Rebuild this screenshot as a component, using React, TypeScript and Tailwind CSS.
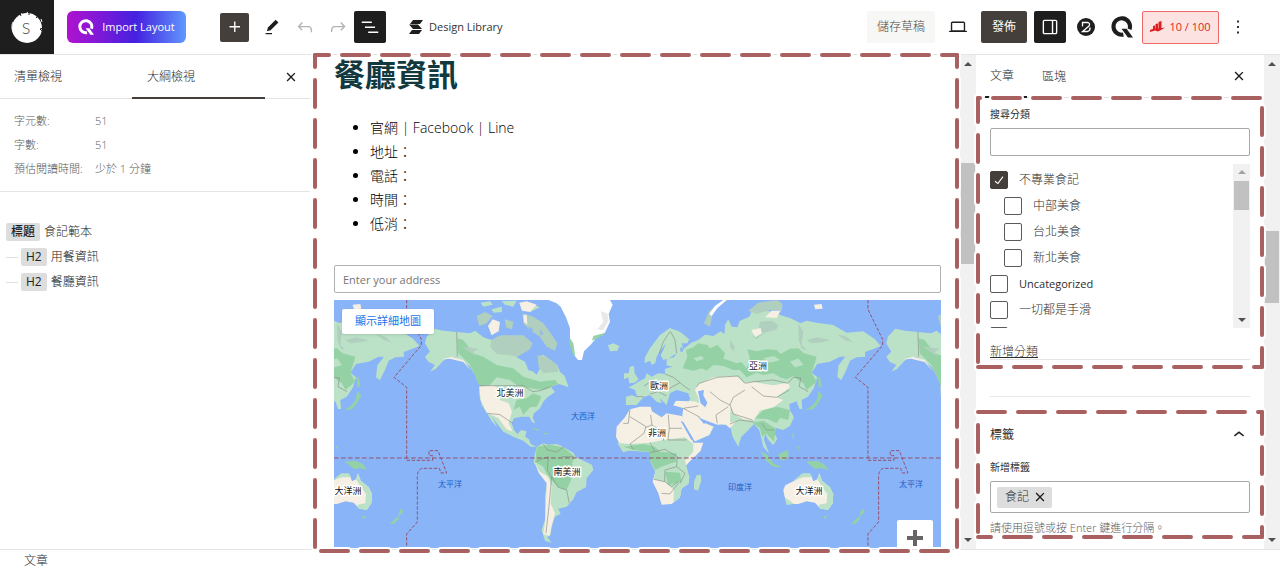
import React, { useState } from 'react';
import clsx from 'clsx';

const ICONS = {
  plus: 'M11 12.5V17.5H12.5V12.5H17.5V11H12.5V6H11V11H6V12.5H11Z',
  edit: 'm19 7-3-3-8.5 8.5-1 4 4-1L19 7Zm-7 11.5H5V20h7v-1.5Z',
  undo: 'M18.3 11.7c-.6-.6-1.4-.9-2.3-.9H6.7l2.9-3.3-1.1-1-4.5 5L8.5 16l1-1-2.7-2.7H16c.5 0 .9.2 1.3.5 1 1 1 3.4 1 4.5v.3h1.5v-.2c0-1.5 0-4.3-1.5-5.7z',
  redo: 'M15.6 6.5l-1.1 1 2.9 3.3H8c-.9 0-1.7.3-2.3.9-1.4 1.5-1.4 4.2-1.4 5.6v.2h1.5v-.3c0-1.1 0-3.5 1-4.5.3-.3.7-.5 1.3-.5h9.2L14.5 15l1.1 1.1 4.6-4.6-4.6-5z',
  list: 'M3 6h11v1.5H3V6Zm3.5 5.5h11V13h-11v-1.5ZM21 17H10v1.5h11V17Z',
  close: 'M12 13.06l3.712 3.713 1.061-1.06L13.061 12l3.712-3.712-1.06-1.06L12 10.938 8.288 7.227l-1.061 1.06L10.939 12l-3.712 3.712 1.06 1.061L12 13.061z',
  desktop: 'M20.5 16h-.7V8c0-1.1-.9-2-2-2H6.2c-1.1 0-2 .9-2 2v8h-.7c-.8 0-1.5.7-1.5 1.5h20c0-.8-.7-1.5-1.5-1.5zM5.7 8c0-.3.2-.5.5-.5h11.6c.3 0 .5.2.5.5v7.6H5.7V8z',
  drawer: 'M18 4H6c-1.1 0-2 .9-2 2v12c0 1.1.9 2 2 2h12c1.1 0 2-.9 2-2V6c0-1.1-.9-2-2-2zm-4 14.5H6c-.3 0-.5-.2-.5-.5V6c0-.3.2-.5.5-.5h8v13zm4.5-.5c0 .3-.2.5-.5.5h-2.5v-13H18c.3 0 .5.2.5.5v12z',
  more: 'M13 19h-2v-2h2v2zm0-6h-2v-2h2v2zm0-6h-2V5h2v2z',
  up: 'M6.5 12.4L12 8l5.5 4.4-.9 1.2L12 10l-4.5 3.6-1-1.2z',
  check: 'M16.7 7.1l-6.3 8.5-3.3-2.5-.9 1.2 4.5 3.4L17.9 8z',
};

const Icon = ({ name, size = 22 }: { name: keyof typeof ICONS; size?: number }) => (
  <svg width={size} height={size} viewBox="0 0 24 24" fill="currentColor" className="shrink-0" aria-hidden="true">
    <path d={ICONS[name]} />
  </svg>
);

const QLogo = ({ size }: { size: number }) => (
  <svg width={size} height={size} viewBox="0 0 24 24" fill="none" stroke="currentColor" strokeWidth="4.500" className="shrink-0" aria-hidden="true">
    <path d="M13.500 20.300A9 9 0 1 1 20.200 14.500" />
    <path d="M11.500 14h5.500L24 23.500h-5.500z" fill="currentColor" stroke="none" />
  </svg>
);

// dashed highlight round a region, each side has its own dash phase
interface FrameProps {
  className: string;
  phase: [number, number, number, number];
}

const Frame = ({ className, phase }: FrameProps) => {
  const [top, right, bottom, left] = phase;
  const sides = (
    <>
      <line x1="0" y1="0" x2="100%" y2="0" strokeDashoffset={top} />
      <line x1="100%" y1="0" x2="100%" y2="100%" strokeDashoffset={right} />
      <line x1="0" y1="100%" x2="100%" y2="100%" strokeDashoffset={bottom} />
      <line x1="0" y1="0" x2="0" y2="100%" strokeDashoffset={left} />
    </>
  );
  return (
    <div className={clsx('absolute pointer-events-none z-10', className)}>
      <svg className="w-full h-full overflow-visible" strokeDasharray="27 13" strokeLinecap="round" aria-hidden="true">
        <g stroke="#ffffff" strokeWidth="8">{sides}</g>
        <g stroke="#a86160" strokeWidth="4">{sides}</g>
      </svg>
    </div>
  );
};

const Arrow = ({ down = false, light = false }: { down?: boolean; light?: boolean }) => (
  <svg width="8" height="4" viewBox="0 0 8 4" className={clsx('shrink-0', light ? 'fill-[#a3a3a3]' : 'fill-[#505050]')} aria-hidden="true">
    <path d={down ? 'M0 0h8L4 4z' : 'M0 4h8L4 0z'} />
  </svg>
);

const ScrollBar = ({ className, thumb, light }: { className: string; thumb: string; light?: boolean }) => (
  <div className={clsx('shrink-0 flex flex-col items-center bg-[#f1f1f1]', className)}>
    <Arrow light={light} />
    <div className="flex-1 self-stretch px-px">
      <div className={clsx('bg-[#c1c1c1]', thumb)} />
    </div>
    <Arrow down />
  </div>
);

const OldWorld = () => (
  <g>
    <path fill="#bbe2c6" d="M-12 345L-12 320 5 316 22 322 15 300-5 292 12 284 25 275 45 265 50 250 65 260 85 250 105 252 105 236 128 230 110 226 110 206 132 202 140 190 118 204 100 210 92 196 100 180 108 160 92 180 80 200 76 218 66 225 60 212 44 220 45 202 60 175 90 135 120 114 150 125 178 148 172 160 155 160 160 178 184 158 205 150 225 134 250 138 272 124 284 132 285 104 295 88 305 110 322 112 330 92 358 80 366 62 400 56 440 72 480 84 512 100 530 92 560 98 610 105 650 128 700 124 735 148 752 168 728 178 705 186 706 200 680 202 660 212 650 238 634 270 622 262 626 226 646 200 630 200 600 215 562 222 545 248 562 262 552 294 534 320 515 330 517 358 508 356 500 334 478 342 480 360 492 382 480 408 460 420 438 414 430 422 442 446 430 466 414 448 405 430 402 450 418 492 400 470 388 420 372 402 350 425 334 440 325 470 308 440 300 405 284 404 262 400 210 385 226 400 252 410 238 435 195 454 178 430 156 390 160 354 132 346 138 332 180 326 175 310 140 300 120 310 110 345 90 325 95 340 80 335 60 315 40 322 20 345z" />
    <path fill="#94d2a5" d="M158 235L172 200 168 180 190 172 205 160 232 165 240 175 262 165 285 190 280 206 300 212 320 220 335 216 350 235 360 205 352 178 380 184 410 178 440 180 452 192 480 176 505 175 522 190 560 200 556 215 545 248 560 275 530 300 520 280 505 270 490 258 470 268 450 262 430 250 400 255 380 248 350 262 330 240 310 240 280 228 250 225 230 242 215 235 190 242zM375 385L400 360 440 350 480 360 475 390 450 384 440 400 415 388zM368 398L400 392 412 400 438 416 432 455 418 440 408 430 396 440 390 415z" />
    <path fill="#bbe2c6" d="M190 205L215 198 222 206 200 214zM400 205L432 198 450 210 420 218zM480 215L505 205 520 225 495 232z" />
    <path fill="#b1cfbe" d="M355 62L385 38 440 30 458 42 455 62 420 60 380 72zM390 95L425 92 445 105 440 118 400 130 380 148 370 140 385 118zM505 100L520 125 515 165 530 180 516 176 506 150zM530 150L560 142 600 150 580 156 545 160zM300 150L315 170 310 184 300 170zM620 132L650 140 670 158 645 150z" />
    <path fill="#b1cfbe" d="M222 100L238 62 282 30 292 30 250 62 240 110z" />
    <path fill="#ffffff" d="M238 72L255 48 280 30 290 30 262 55 245 78z" />
    <path fill="#f6efe3" d="M195 300L206 282 250 262 320 258 342 278 370 276 430 286 474 278 480 292 440 322 460 330 430 352 390 362 370 392 340 388 312 372 302 352 300 402 262 404 208 384 226 400 250 410 238 435 195 454 178 430 156 390 160 354 130 346 138 332 192 334 208 340 204 320zM364 120L392 114 396 130 376 142zM405 82L425 62 452 62 440 84zM285 402L320 392 300 415zM552 44L575 42 578 56 556 58z" />
    <path fill="#f6efe3" d="M-42 440L-40 410-15 382 0 358 30 350 62 350 66 364 95 382 110 370 155 378 168 404 182 436 190 458 220 458 212 482 180 514 165 530 178 560 175 582 155 595 150 622 125 642 95 644 85 610 68 575 76 545 60 510 62 488 40 478 10 478-20 485z" />
    <path fill="#bbe2c6" d="M-38 458L0 462 60 458 100 450 165 442 190 462 190 485 165 512 178 560 175 582 155 595 150 622 130 638 132 600 105 575 72 568 76 545 60 510 60 486 0 482-22 485z" />
    <path fill="#94d2a5" d="M-20 470L40 462 75 470 90 485 140 490 138 515 100 528 75 540 60 510 60 486 10 480zM105 545L150 548 155 575 115 585z" />
    <path fill="#bbe2c6" d="M200 556L212 554 214 572 204 602 192 598 192 576zM0 230L12 228 14 250 26 268 14 278-2 280-5 262-18 268-18 250-4 250z" />
    <path fill="#94d2a5" d="M392 485L412 495 430 520 458 532 430 530 408 512zM445 494L462 484 474 480 476 502 460 512 448 506zM528 515L560 512 582 522 596 540 572 534 556 538 540 524zM484 430L492 432 492 450zM500 468L508 470 506 480zM566 304L578 316 566 338 550 358 528 360 548 346 560 330zM570 262L576 290 566 292 564 260z" />
    <path fill="#f6efe3" d="M460 600L466 586 490 574 520 558 545 560 550 574 562 568 568 550 576 572 598 590 610 612 608 640 594 660 570 654 555 638 530 634 505 642 472 642 464 620z" />
    <path fill="#bbe2c6" d="M548 562L540 550 518 550 490 572 520 562zM562 568L568 550 576 572 600 590 610 612 608 640 594 660 570 656 566 644 590 640 592 612 575 588zM464 622L470 645 492 642 482 634z" />
    <path fill="#94d2a5" d="M578 678L592 678 586 688zM694 658L706 662 694 676 688 680zM686 680L692 684 676 702 664 700z" />
    <path fill="#8ab4f8" d="M122 318L138 306 150 316 165 314 182 324 176 334 140 332 126 330zM204 304L222 300 220 316 232 338 226 352 212 340zM152 392L160 396 190 446 184 450zM204 380L232 396 222 402zM152 170L160 176 158 186 150 184z" />
    <path fill="none" stroke="#8b8f88" strokeWidth="2" d="M200 290L208 280 262 262 325 258 345 280 372 275 430 270 474 280 490 262 512 264 508 290 535 305M365 290L400 318 440 322 478 300M240 305L270 330 300 345 310 322 345 300M262 400L258 375 295 350M300 402L330 390 372 396M205 348L160 355 210 382M300 345L310 372 368 390M395 400L410 420 432 420M0 358L-5 400-20 400M0 380L48 410 42 430 0 462M62 375L66 405 48 412M115 374L118 415 156 415M66 405L104 430 100 452M118 415L114 450 170 450M60 488L105 478 142 500 140 530 105 540 104 575 72 568M0 462L10 478M60 458L75 485M140 530L165 550 150 580M104 575L125 590 145 575M95 610L120 612 145 580M42 288L62 275 100 280 110 300 150 278M60 312L85 305 110 318M105 252L130 262 165 290 180 300M88 190L100 155 120 125M122 125L135 150 140 190M20 320L42 320" />
  </g>
);

const NewWorld = () => (
  <g>
    <path fill="#bbe2c6" d="M345 160L350 140 372 116 400 122 440 126 480 130 496 122 520 142 545 150 600 150 625 182 620 202 645 215 655 240 668 244 680 254 690 235 683 200 700 194 720 210 742 225 750 245 764 258 776 292 748 282 722 290 735 306 712 322 700 335 690 355 672 370 668 384 676 400 666 396 658 380 635 380 612 385 605 400 612 420 622 432 634 420 650 424 645 440 657 448 662 462 680 470 662 470 640 452 610 440 580 425 562 402 545 378 562 412 545 394 532 370 515 345 508 315 508 285 495 255 480 230 455 210 435 202 420 202 400 212 378 236 360 245 375 225 355 215 345 200 360 185z" />
    <path fill="#94d2a5" d="M442 145L460 150 490 190 520 200 560 225 610 235 640 260 690 275 735 270 745 282 700 300 660 295 620 285 600 270 560 262 540 285 508 288 498 262 478 222 445 190zM620 330L650 325 670 310 695 320 680 350 660 352 640 375 630 350 610 360z" />
    <path fill="#b1cfbe" d="M545 150L570 136 640 136 668 160 660 178 640 190 622 200 600 196 560 192 540 170zM638 70L670 80 700 100 722 130 742 160 735 182 710 170 690 140 660 120 640 100zM500 78L525 66 548 78 530 100 508 108zM585 88L610 95 606 118 588 112zM683 196L710 200 742 225 745 245 700 250 686 230zM455 170L505 176 490 186 500 200z" />
    <path fill="#bbe2c6" d="M512 38L540 34 548 44 520 50zM545 58L575 50 576 66 550 68zM575 34L620 32 610 50 585 44zM640 50L670 44 690 52 660 66z" />
    <path fill="#8ab4f8" d="M572 118L582 128 570 138 562 132zM655 108L672 120 662 124zM690 118L700 132 692 136z" />
    <path fill="#f6efe3" d="M534 108L548 88 570 96 566 124 545 136zM628 38L650 34 680 44 660 66 636 62zM640 76L650 74 652 104 642 96z" />
    <path fill="#ffffff" d="M716 30L740 40 752 50 768 82 780 115 780 150 790 192 804 210 816 210 822 184 842 164 862 140 884 130 900 95 896 72 908 44 900 30z" />
    <path fill="#e7e9e9" d="M872 64L892 70 896 92 880 120 862 118 880 96z" />
    <path fill="#94d2a5" d="M780 145L790 160 796 200 786 186 778 160zM850 138L886 128 880 136 846 152z" />
    <path fill="#bbe2c6" d="M894 166L910 160 928 168 922 182 900 184z" />
    <path fill="#f6efe3" d="M508 290L550 286 575 300 570 330 596 340 606 365 596 400 608 425 590 418 565 384 530 368 512 330zM395 208L425 200 460 210 484 244 460 216 420 206z" />
    <path fill="#94d2a5" d="M664 412L690 420 680 422zM700 428L718 430 704 434z" />
    <path fill="#bbe2c6" d="M680 470L700 460 715 464 740 462 755 468 790 488 798 502 846 524 850 540 830 565 828 592 800 606 790 628 770 650 745 656 752 672 735 680 725 710 722 735 712 742 725 758 705 752 695 720 705 690 705 620 712 572 690 545 672 520 672 505z" />
    <path fill="#94d2a5" d="M680 470L720 464 760 472 795 500 786 520 794 545 770 600 745 592 715 560 700 530 676 516z" />
    <path fill="#f6efe3" d="M676 522L690 545 715 560 725 590 722 640 735 670 725 708 718 738 700 732 706 690 708 640 710 580 686 548z" />
    <path fill="none" stroke="#8b8f88" strokeWidth="2" d="M440 126L442 200M508 287H640L668 305 690 302 722 290M532 370L570 374 608 400M700 462L712 480 740 486 762 470M676 515L715 500 712 540 745 592M745 592L770 600 778 640M725 560L718 640 708 730M790 500H755" />
  </g>
);

const DateLine = () => (
  <path
    fill="none"
    stroke="#93506d"
    strokeWidth="3"
    strokeDasharray="10 5"
    d="M290 30V58L334 148V166L252 262 290 292V511H368V497H357V482H384L410 549H393L388 535H336Q322 540 322 560V696L290 732V771"
  />
);

const LABELS = [
  { x: 176, y: 96, text: '北美洲' },
  { x: 233, y: 175, text: '南美洲' },
  { x: 325, y: 89, text: '歐洲' },
  { x: 323, y: 136, text: '非洲' },
  { x: 424, y: 69, text: '亞洲' },
  { x: 475, y: 194, text: '大洋洲' },
  { x: 14, y: 194, text: '大洋洲' },
];

const SEAS = [
  { x: 249, y: 119, text: '大西洋' },
  { x: 116, y: 187, text: '太平洋' },
  { x: 406, y: 190, text: '印度洋' },
  { x: 577, y: 187, text: '太平洋' },
];

const WorldMap = () => (
  <svg viewBox="0 0 607 248" preserveAspectRatio="xMidYMid slice" className="block w-full h-[248px] bg-[#8ab4f8]" role="img" aria-label="地圖">
    <g transform="translate(-24 -10) scale(0.3333)">
      {[-1384, 0, 1384].map((shift) => (
        <g key={shift} transform={`translate(${shift} 0)`}>
          <g transform="translate(960 0)"><OldWorld /></g>
          <NewWorld />
          <DateLine />
        </g>
      ))}
      <path d="M72 504H1900" stroke="#93506d" strokeWidth="3" strokeDasharray="14 7" />
    </g>
    <g textAnchor="middle" fontSize="9">
      {LABELS.map((l) => (
        <text key={l.text + l.x} x={l.x} y={l.y} fill="#111111" stroke="#ffffff" strokeWidth="3" strokeLinejoin="round" paintOrder="stroke">{l.text}</text>
      ))}
      {SEAS.map((l) => (
        <text key={l.text + l.x} x={l.x} y={l.y} fill="#1c5cc4" fontSize="8">{l.text}</text>
      ))}
    </g>
  </svg>
);

const Header = () => (
  <header className="h-[55px] shrink-0 flex items-center justify-between border-b border-[#e4e4e4]">
    <div className="flex items-center">
      <a href="#home" aria-label="Home" className="w-[54px] h-[54px] bg-[#1e1e1e] flex items-center justify-center">
        <svg width="34" height="34" viewBox="0 0 34 34" aria-hidden="true">
          <circle cx="17" cy="18" r="15" fill="#ffffff" />
          <path d="M10 3l1 3M19 1l0 4M28 6l-2 2M33 18l-3 1 2 2" stroke="#1e1e1e" strokeWidth="1" fill="none" />
          <path d="M11 3.500l1.500 1M17 2l1 2M31 9l1 3M3 12C1 16 2 21 4 24" stroke="#ffffff" strokeWidth="1" fill="none" />
          <text x="16" y="24" textAnchor="middle" fontSize="16" fill="#444444" fontFamily="Lato, sans-serif" fontWeight="300">S</text>
        </svg>
      </a>
      <button className="ml-[13px] w-[119px] h-8 rounded-md bg-[linear-gradient(90deg,#b012cf_0%,#4421e0_58%,#5f98fd_100%)] text-white text-[11px] flex items-center justify-center gap-2">
        <QLogo size={16} />
        Import Layout
      </button>
      <button aria-label="Add block" className="ml-[34px] size-[29px] rounded-xs bg-[#443f3b] text-white flex items-center justify-center"><Icon name="plus" /></button>
      <div className="ml-3 flex items-center gap-[11px]">
        <button aria-label="Tools"><Icon name="edit" /></button>
        <button aria-label="Undo" className="text-[#b4b4b4]"><Icon name="undo" /></button>
        <button aria-label="Redo" className="text-[#b4b4b4]"><Icon name="redo" /></button>
      </div>
      <button aria-label="Document overview" className="ml-[5px] size-8 rounded-xs bg-[#1e1e1e] text-white flex items-center justify-center"><Icon name="list" /></button>
      <button className="ml-[22px] flex items-center gap-[5px] text-[11px] text-[#333333]">
        <svg width="16" height="16" viewBox="0 0 16 16" fill="#1e1e1e" aria-hidden="true">
          <path d="M5 1h10l-3 4H2z M1 5.500h9l4 4.500H5z M4 11h10l-3 4H1z" />
        </svg>
        Design Library
      </button>
    </div>
    <div className="flex items-center pr-[31px]">
      <button className="w-[68px] h-8 rounded-xs bg-[#f7f7f6] text-xs font-light text-[#4c4c4c]">儲存草稿</button>
      <button aria-label="Preview" className="ml-3"><Icon name="desktop" /></button>
      <button className="ml-3 w-[46px] h-8 rounded-xs bg-[#443f3b] text-xs text-white">發佈</button>
      <button aria-label="Settings" className="ml-[7px] size-8 rounded-xs bg-[#1e1e1e] text-white flex items-center justify-center"><Icon name="drawer" size={22} /></button>
      <button aria-label="Blocks" className="ml-[11px]">
        <svg width="18" height="18" viewBox="0 0 18 18" aria-hidden="true">
          <circle cx="9" cy="9" r="9" fill="#1e1e1e" />
          <path d="M5.500 8.500V4.500h5.500q2.500 1 1 3.500L5.500 13.500h5q3-1 2.500-4" stroke="#ffffff" strokeWidth="1.300" fill="none" />
        </svg>
      </button>
      <button aria-label="Layouts" className="ml-4 text-[#1e1e1e]"><QLogo size={22} /></button>
      <button className="ml-[9px] w-[77px] h-[33px] rounded-xs border border-[#f0696a] bg-[#fde2e2] text-[#dd1f1f] text-[11px] font-medium flex items-center justify-center gap-1">
        <svg width="15" height="12" viewBox="0 0 15 12" fill="currentColor" aria-hidden="true">
          <path d="M3 5l2-.5V8H3zM5.500 3l2.500-.5V8H5.500zM8.500 1l3-1v8h-3zM0 9l4-1.500h5l6-1-4 2.500-3 1.500L5 9.500 0 11z" />
        </svg>
        10 / 100
      </button>
      <button aria-label="Options" className="ml-[8px]"><Icon name="more" /></button>
    </div>
  </header>
);

const OUTLINE = [
  { level: '標題', text: '食記範本' },
  { level: 'H2', text: '用餐資訊' },
  { level: 'H2', text: '餐廳資訊' },
];

const STATS = [
  ['字元數:', '51'],
  ['字數:', '51'],
  ['預估閱讀時間:', '少於 1 分鐘'],
];

const OverviewPanel = () => (
  <aside className="w-[310px] shrink-0">
    <div className="h-11 flex border-b border-[#e4e4e4] text-xs font-light text-[#2c2c2c]">
      <button className="w-[132px] pl-[14px] text-left">清單檢視</button>
      <button className="w-[133px] -mb-px pl-[15px] pt-[2px] text-left border-b-2 border-[#443f3b]">大綱檢視</button>
      <button aria-label="Close" className="ml-[15px] text-[#1e1e1e]"><Icon name="close" /></button>
    </div>
    <dl className="h-[93px] pt-[10px] pl-[14px] grid grid-cols-[81px_1fr] auto-rows-[24px] items-center border-b border-[#e4e4e4] text-[11px] font-light text-[#5b5b5b]">
      {STATS.map(([k, v]) => (
        <React.Fragment key={k}>
          <dt>{k}</dt>
          <dd>{v}</dd>
        </React.Fragment>
      ))}
    </dl>
    <ul className="pt-[31px] pl-[6px] flex flex-col gap-[7px] text-xs font-light text-[#222222]">
      {OUTLINE.map((o, i) => (
        <li key={o.text} className="h-[18px] flex items-center">
          {i > 0 && <span className="w-3 h-px mr-[3px] bg-[#e0e0e0]" />}
          <a href="#block" className="flex items-center gap-1">
            <span className="h-[18px] px-[5px] rounded-xs bg-[#dddddd] font-medium leading-[18px]">{o.level}</span>
            {o.text}
          </a>
        </li>
      ))}
    </ul>
  </aside>
);

const Canvas = () => (
  <main className="relative flex-1 min-w-0 pl-[24px] pr-[19px]">
    <h2 className="text-[31px] leading-[38px] font-bold text-[#12393d]">餐廳資訊</h2>
    <ul className="mt-[23px] pl-9 list-disc text-sm leading-6 font-light text-black">
      <li>官網 | Facebook | Line</li>
      <li>地址：</li>
      <li>電話：</li>
      <li>時間：</li>
      <li>低消：</li>
    </ul>
    <input aria-label="Address" placeholder="Enter your address" className="mt-[29px] block w-full h-7 px-2 rounded-xs border border-[#b0b0b0] text-[11px] placeholder:text-[#757575]" />
    <div className="relative mt-[7px]">
      <WorldMap />
      <button className="absolute left-2 top-[9px] w-[92px] h-[25px] rounded-xs bg-white text-[11px] text-[#1a73e8] shadow-sm">顯示詳細地圖</button>
      <button aria-label="Zoom in" className="absolute right-2 bottom-0 w-9 h-[28px] rounded-t-xs bg-white text-[#666666] flex justify-center pt-[10px] overflow-hidden">
        <svg width="16" height="16" viewBox="0 0 16 16" fill="currentColor" className="shrink-0" aria-hidden="true"><path d="M6 0h4v6h6v4H10v6H6V10H0V6h6z" /></svg>
      </button>
    </div>
    <Frame className="left-[5px] right-[3px] top-0 h-[496px]" phase={[13, 15, 34, 15]} />
  </main>
);

const CATEGORIES = [
  { id: 1, name: '不專業食記', child: false },
  { id: 2, name: '中部美食', child: true },
  { id: 3, name: '台北美食', child: true },
  { id: 4, name: '新北美食', child: true },
  { id: 5, name: 'Uncategorized', child: false },
  { id: 6, name: '一切都是手滑', child: false },
  { id: 7, name: '', child: false },
];

const CategoryList = () => {
  const [checked, setChecked] = useState<number[]>([1]);
  const toggle = (id: number) =>
    setChecked((prev) => (prev.includes(id) ? prev.filter((n) => n !== id) : [...prev, id]));

  return (
    <div className="mt-2 h-[164px] flex overflow-hidden">
      <div className="flex-1 pt-[7px] flex flex-col gap-2 text-xs font-light">
        {CATEGORIES.map((c) => (
          <label key={c.id} className={clsx('h-[18px] shrink-0 flex items-center gap-[11px]', c.child && 'pl-[14px]')}>
            <span className="grid text-white">
              <input
                type="checkbox"
                aria-label={c.name || 'Category'}
                checked={checked.includes(c.id)}
                onChange={() => toggle(c.id)}
                className="col-start-1 row-start-1 appearance-none size-[18px] rounded-xs border border-[#5a5a5a] bg-white checked:bg-[#443f3b] checked:border-[#443f3b]"
              />
              {checked.includes(c.id) && <span className="col-start-1 row-start-1 pointer-events-none"><Icon name="check" size={18} /></span>}
            </span>
            <span className={clsx(c.id === 5 && 'text-[11px] font-normal')}>{c.name}</span>
          </label>
        ))}
      </div>
      <ScrollBar className="w-[17px] py-[6px]" thumb="mt-[7px] h-[29px]" light />
    </div>
  );
};

const SettingsSidebar = () => (
  <aside className="w-[288px] shrink-0 h-[494px] bg-white text-[#2c2c2c]">
    <div className="h-[43px] px-[9px] flex items-center border-b border-[#e4e4e4] text-xs font-light">
      <button className="w-[42px] h-[43px] border-b-2 border-[#1e1e1e] pl-[5px] pt-[2px] text-left">文章</button>
      <button className="ml-[15px] pt-[2px]">區塊</button>
      <button aria-label="Close settings" className="ml-auto mr-[5px] text-[#1e1e1e]"><Icon name="close" /></button>
    </div>
    <section className="relative h-[269px] px-[14px] pt-[6px]">
      <label htmlFor="cat-search" className="block text-[10px] leading-5">搜尋分類</label>
      <input id="cat-search" className="mt-1 block w-full h-7 rounded-xs border border-[#a8a8a8] px-2 text-xs" />
      <CategoryList />
      <div className="mt-[14px] h-[18px] border-b border-[#e4e4e4]">
        <a href="#add-category" className="block text-xs leading-[20px] font-light underline">新增分類</a>
      </div>
      <Frame className="left-[2px] right-[2px] top-0 bottom-0" phase={[25, 30, 4, 3]} />
    </section>
    <div className="mx-[14px] h-[30px] border-b border-[#e8e8e8]" />
    <section className="relative mt-[15px] h-[125px] px-[14px] pt-3">
      <button className="w-full h-[22px] flex items-center justify-between text-xs">
        標籤
        <span className="text-[#1e1e1e]"><Icon name="up" /></span>
      </button>
      <label htmlFor="tag-input" className="mt-[11px] block text-[10px] leading-5">新增標籤</label>
      <div className="mt-1 h-8 px-[6px] rounded-xs border border-[#a8a8a8] flex items-center gap-1">
        <span className="h-[21px] pl-2 pr-px rounded-xs bg-[#dddddd] flex items-center text-xs font-light">
          食記
          <button aria-label="移除 食記" className="text-[#1e1e1e]"><Icon name="close" /></button>
        </span>
        <input id="tag-input" className="flex-1 min-w-0 text-xs outline-none" />
      </div>
      <p className="mt-[7px] text-[11px] leading-[16px] font-light text-[#5b5b5b]">請使用逗號或按 Enter 鍵進行分隔。</p>
      <Frame className="left-[2px] right-[2px] top-0 bottom-0" phase={[0, 5, 14, 27]} />
    </section>
  </aside>
);

export default function App() {
  return (
    <div className="min-h-screen flex flex-col bg-white text-[#1e1e1e] font-['Open_Sans','Noto_Sans_CJK_TC',sans-serif]">
      <Header />
      <div className="flex h-[494px]">
        <OverviewPanel />
        <Canvas />
        <ScrollBar className="w-4 py-[7px]" thumb="mt-[97px] h-[101px]" />
        <SettingsSidebar />
        <ScrollBar className="w-4 py-[7px]" thumb="mt-[165px] h-[72px]" />
      </div>
      <footer className="h-[22px] shrink-0 border-t border-[#e4e4e4] pl-6 text-xs leading-[22px] font-light text-[#2c2c2c]">文章</footer>
    </div>
  );
}
